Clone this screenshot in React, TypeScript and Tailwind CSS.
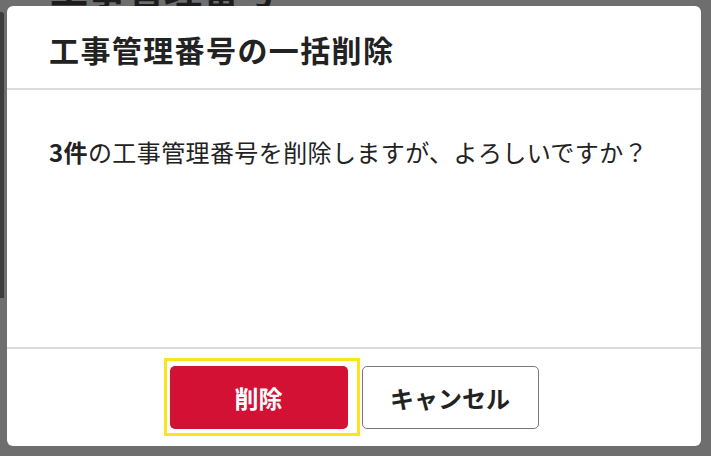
export default function App() {
  const jp = "font-['Noto_Sans_CJK_JP','Noto_Sans',sans-serif]";

  return (
    <div className={`relative h-[456px] w-[711px] overflow-hidden bg-[#6e6e6e] ${jp}`}>
      {/* page behind the overlay */}
      <div className="h-[6px] overflow-hidden pl-[50px]">
        <div className="mt-[-31px] text-[38px] font-bold leading-[38px] text-[#1c1c1c]">工事管理番号</div>
      </div>
      <div className="absolute left-0 top-[12px] h-[286px] w-[4px] rounded-tr-[3px] bg-[#3c3c3c]" />

      <div className="ml-[7px] w-[694px] overflow-hidden rounded-[6px] bg-white text-[#222]">
        <div className="flex h-[84px] items-center border-b-2 border-[#dcdcdc] px-[42px] pt-[3px]">
          <h2 className="text-[30px] font-bold leading-none tracking-[1.4px]">工事管理番号の一括削除</h2>
        </div>

        <div className="h-[257px] px-[42px] pt-[46px]">
          <p className="text-[24px] leading-[32px] tracking-[0.4px]">
            <span className="font-bold">3件</span>の工事管理番号を削除しますが、よろしいですか？
          </p>
        </div>

        <div className="flex h-[99px] items-center justify-center gap-[14px] border-t-2 border-[#dcdcdc]">
          <div className="relative">
            <span className="absolute -bottom-[7px] -left-[6px] -right-[12px] -top-[8px] border-[3px] border-[#fbe41c]" />
            <button className="relative flex h-[63px] w-[178px] items-center justify-center rounded-[5px] bg-[#d31134] text-[24px] font-bold text-white">
              削除
            </button>
          </div>
          <button className="flex h-[63px] w-[177px] items-center justify-center rounded-[5px] border-[1.5px] border-[#777] bg-white text-[24px] font-bold text-[#222]">
            キャンセル
          </button>
        </div>
      </div>
    </div>
  );
}
